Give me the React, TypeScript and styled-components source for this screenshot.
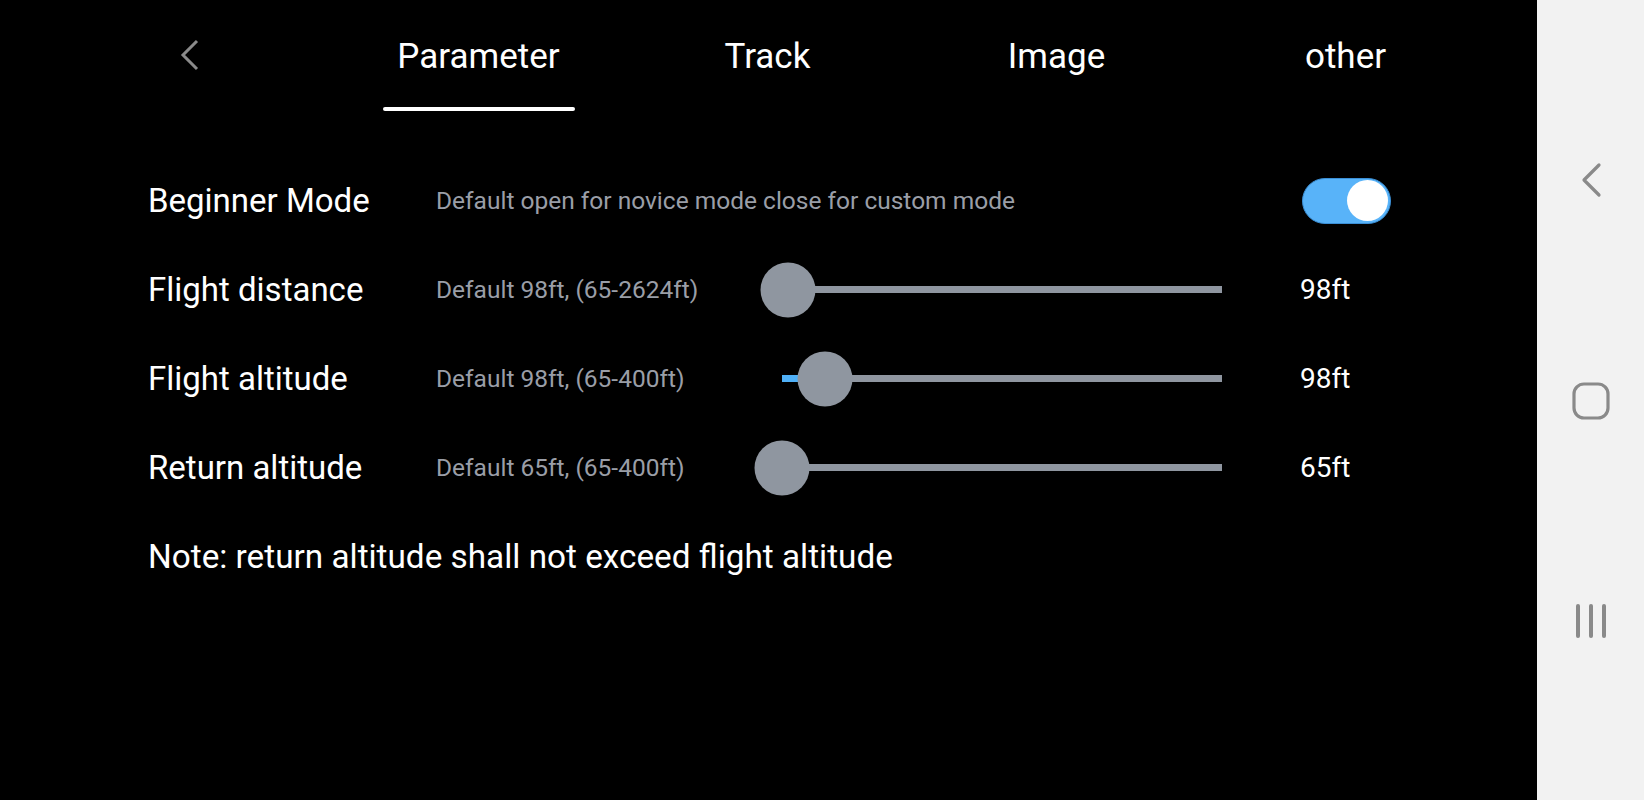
import React, { useState } from 'react';
import styled, { createGlobalStyle } from 'styled-components';

const GlobalStyle = createGlobalStyle`
  html, body {
    margin: 0;
    padding: 0;
    background: #000;
  }
  * { box-sizing: border-box; }
`;

interface SliderSetting {
    id: string;
    label: string;
    hint: string;
    min: number;
    max: number;
    value: number;
}

const tabs = ['Parameter', 'Track', 'Image', 'other'];

const sliders: SliderSetting[] = [
    { id: 'distance', label: 'Flight distance', hint: 'Default 98ft, (65-2624ft)', min: 65, max: 2624, value: 98 },
    { id: 'altitude', label: 'Flight altitude', hint: 'Default 98ft, (65-400ft)', min: 65, max: 400, value: 98 },
    { id: 'return', label: 'Return altitude', hint: 'Default 65ft, (65-400ft)', min: 65, max: 400, value: 65 },
];

function Slider(props: { setting: SliderSetting }) {
    const { min, max, value } = props.setting;
    const pct = ((value - min) / (max - min)) * 100;
    return (
        <SliderBox>
            <Track>
                <Fill style={{ width: `${pct}%` }} />
                <Thumb style={{ left: `${pct}%` }} />
            </Track>
        </SliderBox>
    );
}

export default function App() {
    const [active, setActive] = useState(0);
    const [beginner, setBeginner] = useState(true);

    return (
        <Screen>
            <GlobalStyle />
            <Main>
                <Header>
                    <BackButton>
                        <svg width="20" height="32" viewBox="0 0 20 32">
                            <polyline points="17,2 3,16 17,30" fill="none" stroke="#8a8a8a" strokeWidth="3" />
                        </svg>
                    </BackButton>
                    <TabList>
                        {tabs.map((t, i) => (
                            <Tab key={t} onClick={() => setActive(i)}>
                                <TabText>{t}</TabText>
                                <TabLine $active={i === active} />
                            </Tab>
                        ))}
                    </TabList>
                </Header>

                <Settings>
                    <Label>Beginner Mode</Label>
                    <Hint $wide>Default open for novice mode close for custom mode</Hint>
                    <ToggleCell>
                        <Toggle $on={beginner} onClick={() => setBeginner(!beginner)}>
                            <Knob />
                        </Toggle>
                    </ToggleCell>

                    {sliders.map((s) => (
                        <React.Fragment key={s.id}>
                            <Label>{s.label}</Label>
                            <Hint>{s.hint}</Hint>
                            <Slider setting={s} />
                            <Value>{s.value}ft</Value>
                        </React.Fragment>
                    ))}
                </Settings>

                <Note>Note: return altitude shall not exceed flight altitude</Note>
            </Main>

            <NavBar>
                <svg width="24" height="36" viewBox="0 0 24 36">
                    <polyline points="20,3 5,18 20,33" fill="none" stroke="#8a8a8a" strokeWidth="3.2" strokeLinecap="round" strokeLinejoin="round" />
                </svg>
                <svg width="38" height="38" viewBox="0 0 38 38">
                    <rect x="2" y="2" width="34" height="34" rx="10" fill="none" stroke="#8a8a8a" strokeWidth="3.2" />
                </svg>
                <svg width="36" height="36" viewBox="0 0 36 36">
                    <g stroke="#8a8a8a" strokeWidth="4" strokeLinecap="round">
                        <line x1="5" y1="3" x2="5" y2="33" />
                        <line x1="18" y1="3" x2="18" y2="33" />
                        <line x1="31" y1="3" x2="31" y2="33" />
                    </g>
                </svg>
            </NavBar>
        </Screen>
    );
}

const Screen = styled.div`
    display: flex;
    width: 1644px;
    height: 800px;
    background: #000;
    font-family: Roboto, "Liberation Sans", sans-serif;
    color: #fff;
    overflow: hidden;
`

const Main = styled.div`
    width: 1537px;
    display: flex;
    flex-direction: column;
`

const Header = styled.div`
    display: flex;
    align-items: flex-start;
    height: 156px;
    padding-left: 170px;
`

const BackButton = styled.div`
    width: 40px;
    height: 110px;
    display: flex;
    align-items: center;
    justify-content: center;
    cursor: pointer;
`

const TabList = styled.div`
    display: flex;
    margin-left: 124px;
`

const Tab = styled.div`
    width: 289px;
    height: 111px;
    display: flex;
    flex-direction: column;
    align-items: center;
    justify-content: space-between;
    padding-top: 36px;
    cursor: pointer;
`

const TabText = styled.span`
    font-size: 35px;
    line-height: 42px;
    color: #fff;
`

const TabLine = styled.div<{ $active: boolean }>`
    width: 192px;
    height: 4px;
    border-radius: 2px;
    background: ${(p) => (p.$active ? '#fff' : 'transparent')};
`

const Settings = styled.div`
    display: grid;
    grid-template-columns: 288px 318px 496px 141px;
    grid-auto-rows: 89px;
    align-items: center;
    padding-left: 148px;
`

const Label = styled.div`
    font-size: 33px;
    color: #fff;
    white-space: nowrap;
`

const Hint = styled.div<{ $wide?: boolean }>`
    font-size: 24.5px;
    color: #9a9ea7;
    white-space: nowrap;
    ${(p) => (p.$wide ? 'grid-column: span 2;' : '')}
`

const SliderBox = styled.div`
    height: 89px;
    padding: 0 28px;
    display: flex;
    align-items: center;
`

const Track = styled.div`
    position: relative;
    flex: 1;
    height: 7px;
    background: #8f96a0;
`

const Fill = styled.div`
    height: 100%;
    background: #4fb0f7;
`

const Thumb = styled.div`
    position: absolute;
    top: 50%;
    width: 55px;
    height: 55px;
    border-radius: 50%;
    background: #8f96a0;
    transform: translate(-50%, -50%);
`

const Value = styled.div`
    font-size: 28px;
    color: #fff;
    padding-left: 50px;
    white-space: nowrap;
`

const ToggleCell = styled.div`
    display: flex;
    justify-content: flex-end;
    grid-column: 4;
`

const Toggle = styled.div<{ $on: boolean }>`
    width: 89px;
    height: 46px;
    border-radius: 23px;
    background: ${(p) => (p.$on ? '#58b3f9' : '#5a5e66')};
    border: 1px solid ${(p) => (p.$on ? '#3b8fd6' : '#5a5e66')};
    display: flex;
    align-items: center;
    justify-content: ${(p) => (p.$on ? 'flex-end' : 'flex-start')};
    padding: 0 2px;
    cursor: pointer;
`

const Knob = styled.div`
    width: 41px;
    height: 41px;
    border-radius: 50%;
    background: #fff;
`

const Note = styled.div`
    padding-left: 148px;
    height: 89px;
    display: flex;
    align-items: center;
    font-size: 33.3px;
    color: #fff;
`

const NavBar = styled.div`
    width: 107px;
    height: 800px;
    background: #f2f2f2;
    display: flex;
    flex-direction: column;
    align-items: center;
    justify-content: space-between;
    padding: 162px 0 161px;
`
